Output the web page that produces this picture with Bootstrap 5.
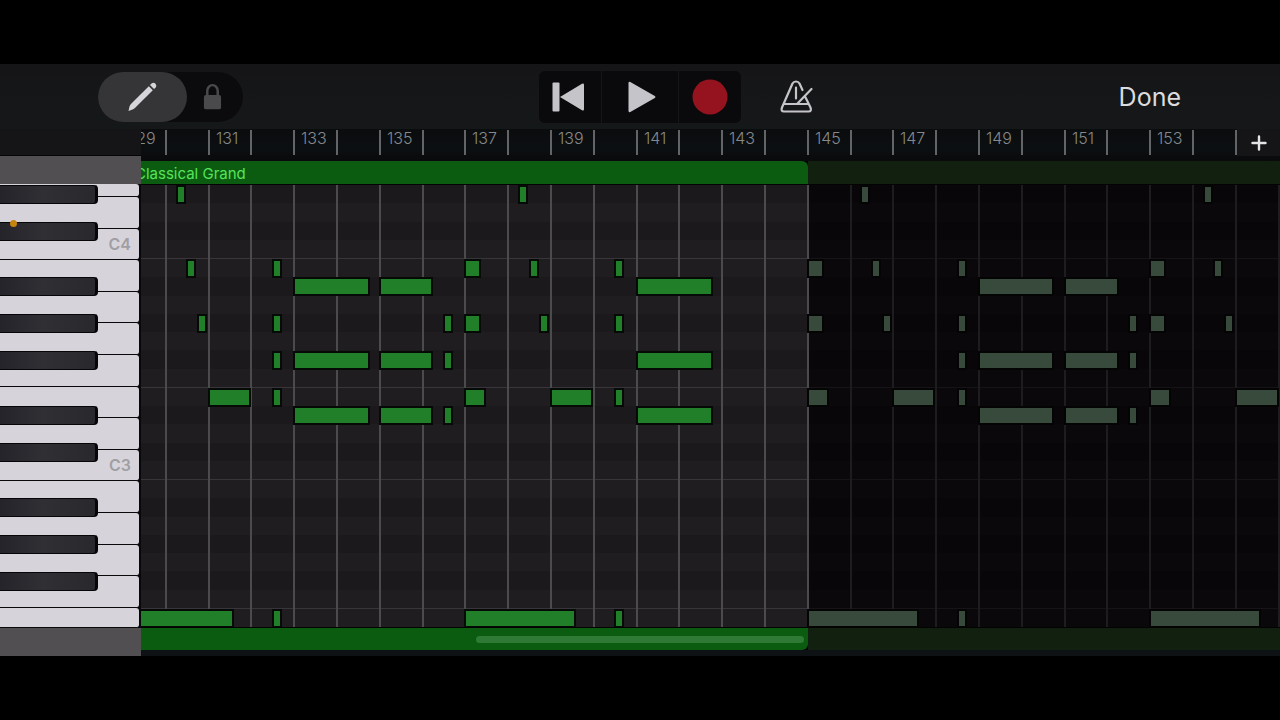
<!DOCTYPE html>
<html lang="en">
<head>
<meta charset="utf-8">
<meta name="viewport" content="width=device-width, initial-scale=1">
<title>Piano Roll</title>
<link href="https://cdn.jsdelivr.net/npm/bootstrap@5.3.0/dist/css/bootstrap.min.css" rel="stylesheet">
<style>
  body { background: #000; color: #dcdcde; font-family: Inter, "Liberation Sans", sans-serif; }
  button { border: 0; padding: 0; background: transparent; color: #c5c4c9; }

  /* toolbar */
  .toolbar { display: grid; grid-template-columns: 1fr auto 1fr; height: 65px; background: linear-gradient(#151517, #151819); }
  .mode-switch { margin-left: 98px; background: #0b0b0d; }
  .mode-btn { height: 50px; width: 56px; color: #4a494c; }
  .mode-btn.active { width: 89px; background: #353437; color: #d6d5d9; }
  .transport { background: #151618; border-radius: 6px; gap: 1px; overflow: hidden; }
  .transport button { height: 52px; width: 62px; background: #0a0a0c; }
  .transport .rewind { padding-right: 4px; }
  .transport .play { width: 76px; padding-left: 3px; }
  .metronome { margin-left: 38px; }
  .done { margin-right: 99px; font-size: 25px; line-height: 32px; color: #dcdcde; }

  /* keyboard */
  .side { width: 141px; }
  .side-head { height: 27px; background: #151517; border-bottom: 1px solid #050506; }
  .side-strip { height: 28px; background: #514f52; }
  .keyboard { height: 444px; padding-right: 2px; background: #08080b; }
  .white-key { flex: 1 1 0; min-height: 0; background: #d6d4da; border-bottom: 1px solid #08080b; border-radius: 0 3px 3px 0; color: #a19fa4; padding-right: 8px; font-size: 16px; font-weight: 600; line-height: 20px; }
  .white-key.top-cut { flex: 0 0 13px; }
  .white-key.bottom-cut { flex: 0 0 20px; }
  .black-key { left: 0; width: 98px; height: 19px; background: linear-gradient(90deg, #25242a, #302f34 45%, #29282d); border: 1px solid #060608; border-left: 0; border-right-width: 3px; border-radius: 0 4px 4px 0; }
  .marker { left: 10px; top: 36px; width: 7px; height: 7px; background: #c5830f; }

  /* timeline */
  .ruler { height: 32px; background: linear-gradient(#0a0c0e, #0c0f11 60%, #0a0a0c); }
  .tick { top: 1px; height: 25px; border-left: 2px solid #626466; padding-left: 6px; font-size: 16px; font-weight: 300; line-height: 16px; color: #86898b; }
  .add-bar { width: 43px; height: 27px; background: #151517; color: #e4e3e7; }
  .played { width: 667px; }
  .region-head { height: 23px; }
  .region-foot { height: 22px; }
  .played .region-head { background: #0b5c10; border-radius: 0 6px 0 0; }
  .played .region-foot { background: #0b5c10; border-radius: 0 0 6px 0; padding: 0 4px; }
  .looped .region-head, .looped .region-foot { background: #11200f; }
  .region-name { margin-left: -6px; font-size: 15px; line-height: 26px; color: #56e45a; white-space: nowrap; }
  .thumb { width: 328px; height: 7px; background: #2f7b36; border-radius: 4px; }
  .bottom-gap { height: 6px; background: #0f1214; }

  .grid-area { height: 444px; border-top: 1px solid #030303; border-bottom: 1px solid #030303; }
  .lane { flex: 1 1 0; min-height: 0; background: #1f1d20; }
  .lane.sharp { background: #1b191c; }
  .lane.edge { border-top: 1px solid #38363a; }
  .barline { top: 0; bottom: 0; width: 2px; background: #4b4a4d; }
  .note { height: 19px; background: #207f28; border: 2px solid #050a06; }
  .looped-grid .lane { background: #0a080b; }
  .looped-grid .lane.sharp { background: #080609; }
  .looped-grid .lane.edge { border-color: #161417; }
  .barline.dim { background: #1d1c1f; }
  .note.dim { background: #374a3b; border-color: #040405; }
</style>
</head>
<body>
<div class="min-vh-100 d-flex flex-column justify-content-center">
<main>
  <header class="toolbar align-items-center">
    <div class="d-flex">
      <div class="mode-switch rounded-pill d-flex" role="group" aria-label="Edit mode">
        <button class="mode-btn active rounded-pill d-flex align-items-center justify-content-center" aria-label="Pencil">
          <svg width="32" height="32" viewBox="0 0 32 32" fill="currentColor"><path d="M1.500 30 2.500 25.500Q3 24 4.200 22.800L21.800 5.200 25.800 9.200 8.200 26.800Q7 28 5.600 28.600Z"/><path d="M23 4 24.500 2.600Q26.600 1 28.500 2.700 30 4.700 28.500 6.700L27 8Z"/></svg>
        </button>
        <button class="mode-btn d-flex align-items-center ps-3" aria-label="Lock">
          <svg width="19" height="30" viewBox="0 0 20 30"><path d="M4.500 14V8.500a5.500 6 0 0 1 11 0V14" fill="none" stroke="currentColor" stroke-width="2.600"/><rect x="1" y="13" width="18" height="15" rx="2" fill="currentColor"/></svg>
        </button>
      </div>
    </div>
    <div class="transport d-flex">
      <button class="rewind" aria-label="Go to beginning"><svg width="34" height="32" viewBox="0 0 34 32" fill="currentColor"><rect x="1.500" y="1.500" width="7" height="29" rx="1"/><path d="M9 16 31 2.700Q33 1.800 33 3.800V28.200Q33 30.200 31 29.300Z"/></svg></button>
      <button class="play" aria-label="Play"><svg width="30" height="32" viewBox="0 0 30 32" fill="currentColor"><path d="M1.500 2.200Q1.500.2 3.300 1.100L27.800 15Q29.300 16 27.800 17L3.300 30.900Q1.500 31.800 1.500 29.800Z"/></svg></button>
      <button aria-label="Record"><svg width="36" height="36" viewBox="0 0 36 36"><circle cx="18" cy="18" r="17.500" fill="#94131e"/></svg></button>
    </div>
    <div class="d-flex align-items-center justify-content-between">
      <button class="metronome" aria-label="Metronome">
        <svg width="36" height="36" viewBox="0 0 36 36" fill="none" stroke="currentColor" stroke-width="2.200" stroke-linecap="round" stroke-linejoin="round"><path d="M26.300 18 31.500 28.500Q33 32.500 29.500 32.500H5Q1.500 32.500 3 28.500L13.500 4.500Q14.600 2.500 17 2.500T20.500 4.500L23.500 11M5.500 25H29.500M17 8.500V19.500M18.500 24.500 32.500 10"/></svg>
      </button>
      <button class="done">Done</button>
    </div>
  </header>

  <div class="d-flex">
    <aside class="side flex-shrink-0">
      <div class="side-head"></div>
      <div class="side-strip"></div>
      <div class="keyboard position-relative d-flex flex-column overflow-hidden" id="keyboard">
        <span class="marker position-absolute rounded-circle z-1"></span>
      </div>
      <div class="side-strip"></div>
    </aside>

    <section class="flex-grow-1 overflow-hidden">
      <div class="ruler d-flex">
        <div class="position-relative flex-grow-1 overflow-hidden" id="ruler"></div>
        <button class="add-bar d-flex align-items-center justify-content-center flex-shrink-0" aria-label="Add section"><svg width="16" height="16" viewBox="0 0 16 16" stroke="currentColor" stroke-width="2.400" stroke-linecap="round"><path d="M8 1.500V14.500M1.500 8H14.500"/></svg></button>
      </div>
      <div class="d-flex">
        <div class="played flex-shrink-0"><div class="region-head overflow-hidden"><div class="region-name">Classical Grand</div></div></div>
        <div class="looped flex-grow-1"><div class="region-head"></div></div>
      </div>
      <div class="grid-area position-relative d-flex overflow-hidden" id="roll">
        <div class="played lanes flex-shrink-0 d-flex flex-column"></div>
        <div class="looped-grid lanes flex-grow-1 d-flex flex-column"></div>
      </div>
      <div class="d-flex">
        <div class="played flex-shrink-0"><div class="region-foot d-flex align-items-center justify-content-end"><div class="thumb"></div></div></div>
        <div class="looped flex-grow-1"><div class="region-foot"></div></div>
      </div>
      <div class="bottom-gap"></div>
    </section>
  </div>
</main>
</div>

<script src="https://cdn.jsdelivr.net/npm/bootstrap@5.3.0/dist/js/bootstrap.bundle.min.js"></script>
<script>
  // Pitches shown, highest first, from D#4 down to E2
  const pitches = ['D#4','D4','C#4','C4',
    'B3','A#3','A3','G#3','G3','F#3','F3','E3','D#3','D3','C#3','C3',
    'B2','A#2','A2','G#2','G2','F#2','F2','E2'];
  const rowHeight = 442 / pitches.length;
  const barWidth = 42.8;      // one bar on screen
  const regionEnd = 145;      // bar where the recorded region ends
  const xOf = bar => Math.round(24.8 + (bar - 130) * barWidth);

  const add = (parent, cls, style) => {
    const el = document.createElement('div');
    el.className = cls;
    Object.assign(el.style, style || {});
    parent.append(el);
    return el;
  };

  // Keyboard
  const keyboard = document.getElementById('keyboard');
  const naturals = pitches.filter(p => !p.includes('#'));
  add(keyboard, 'white-key top-cut');
  naturals.forEach((p, i) => {
    const last = i === naturals.length - 1;
    const key = add(keyboard, 'white-key d-flex align-items-center justify-content-end' + (last ? ' bottom-cut' : ''));
    if (p[0] === 'C') key.textContent = p;
  });
  pitches.forEach((p, i) => {
    if (p.includes('#')) add(keyboard, 'black-key position-absolute', { top: Math.round(i * rowHeight) + 1 + 'px' });
  });

  // Lanes
  document.querySelectorAll('.lanes').forEach(box => pitches.forEach(p =>
    add(box, 'lane' + (p.includes('#') ? ' sharp' : '') + (/^B|^E/.test(p) ? ' edge' : ''))));

  // Ruler ticks and bar lines
  const ruler = document.getElementById('ruler');
  const roll = document.getElementById('roll');
  for (let bar = 129; xOf(bar) < roll.clientWidth; bar++) {
    const x = xOf(bar);
    if (x < ruler.clientWidth) {
      const tick = add(ruler, 'tick position-absolute', { left: x - 1 + 'px' });
      if (bar % 2 && x + 34 < ruler.clientWidth) tick.textContent = bar;
    }
    if (x > 0) add(roll, 'barline position-absolute' + (bar > regionEnd ? ' dim' : ''), { left: x - 1 + 'px' });
  }

  // Notes: pitch -> [start bar, length in bars]
  const S = 0.19;
  const notes = {
    'D#4': [[130.25,S],[138.25,S],[146.25,S],[154.25,S]],
    'B3':  [[130.5,S],[132.5,S],[137,.36],[138.5,S],[140.5,S],[145,.36],[146.5,S],[148.5,S],[153,.36],[154.5,S]],
    'A#3': [[133,1.75],[135,1.21],[141,1.75],[149,1.72],[151,1.24]],
    'G#3': [[130.75,S],[132.5,S],[136.5,S],[137,.36],[138.75,S],[140.5,S],[145,.36],[146.75,S],[148.5,S],[152.5,S],[153,.36],[154.75,S]],
    'F#3': [[132.5,S],[133,1.75],[135,1.21],[136.5,S],[141,1.75],[148.5,S],[149,1.72],[151,1.24],[152.5,S]],
    'E3':  [[131,.96],[132.5,S],[137,.46],[139,.96],[140.5,S],[145,.46],[147,.96],[148.5,S],[153,.46],[155,.98]],
    'D#3': [[133,1.75],[135,1.21],[136.5,S],[141,1.75],[149,1.72],[151,1.24],[152.5,S]],
    'E2':  [[129,2.57],[132.5,S],[137,2.58],[140.5,S],[145,2.58],[148.5,S],[153,2.58]]
  };
  for (const [pitch, list] of Object.entries(notes)) {
    const top = Math.round(pitches.indexOf(pitch) * rowHeight);
    for (const [start, length] of list) {
      add(roll, 'note position-absolute' + (start >= regionEnd ? ' dim' : ''), {
        left: xOf(start) - 1 + 'px',
        top: top + 'px',
        width: Math.round(length * barWidth) + 2 + 'px'
      });
    }
  }
</script>
</body>
</html>
